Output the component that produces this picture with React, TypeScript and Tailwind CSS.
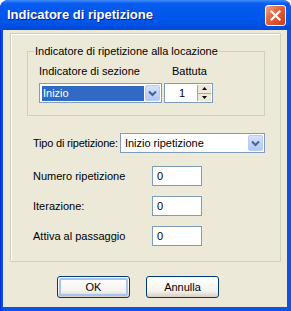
import type { ReactNode } from 'react';

// Windows XP style dialog: "Indicatore di ripetizione"

function Chevron() {
  return (
    <svg width="9" height="7" viewBox="0 0 9 7" aria-hidden="true">
      <path d="M1 1.5 L4.5 5 L8 1.5" fill="none" stroke="#4D6185" strokeWidth="2" />
    </svg>
  );
}

function DropButton() {
  return (
    <div className="flex w-[15px] h-full items-center justify-center rounded-[2px] border border-[#B8CCF4] bg-[linear-gradient(180deg,#D5E2FE_0%,#BFD1FA_60%,#B2C7F5_100%)]">
      <Chevron />
    </div>
  );
}

function TextBox({ value }: { value: string }) {
  return (
    <div className="flex h-[20px] w-[50px] items-center border border-[#7F9DB9] bg-white pl-[4px] text-[11px] leading-[13px] text-black">
      {value}
    </div>
  );
}

function Row({ label, children }: { label: string; children: ReactNode }) {
  return (
    <div className="flex items-center">
      <span className="w-[119px] shrink-0 whitespace-nowrap text-[11px] leading-[13px] text-black">{label}</span>
      {children}
    </div>
  );
}

function XpButton({ label, isDefault }: { label: string; isDefault?: boolean }) {
  return (
    <div className="flex h-[22px] w-[73px] items-center justify-center rounded-[3px] border border-[#003C74] bg-[linear-gradient(180deg,#FFFFFF_0%,#F4F3EE_70%,#D6D0C5_100%)] p-[1px]">
      <div
        className={
          isDefault
            ? 'flex h-full w-full items-center justify-center rounded-[2px] border-2 border-[#A7C3F0]'
            : 'flex h-full w-full items-center justify-center'
        }
      >
        <span className="text-[11px] leading-[13px] text-black">{label}</span>
      </div>
    </div>
  );
}

export default function App() {
  return (
    <div className="h-[311px] w-[291px] bg-white font-['Liberation_Sans',Arial,sans-serif]">
      <div className="flex h-full w-full flex-col overflow-hidden rounded-t-[8px] bg-[linear-gradient(90deg,#0019CF_0px,#0845DA_1px,#0B52E6_3px)]">
        {/* ── Title bar ─────────────────────────────────────────── */}
        <div className="flex h-[30px] flex-none items-center justify-between rounded-t-[8px] bg-[linear-gradient(180deg,#3D8BFA_0%,#0A5CF0_12%,#0058EE_40%,#0055E8_75%,#0048D8_100%)] pl-[7px] pr-[5px]">
          <span className="text-[13px] font-bold leading-[16px] text-white [text-shadow:1px_1px_0_#0A1E8C]">
            Indicatore di ripetizione
          </span>
          <div className="flex h-[21px] w-[21px] items-center justify-center rounded-[3px] border border-white bg-[linear-gradient(135deg,#F0A590_0%,#E3663F_40%,#CC3A12_100%)]">
            <svg width="11" height="11" viewBox="0 0 11 11" aria-hidden="true">
              <path d="M1.5 1.5 L9.5 9.5 M9.5 1.5 L1.5 9.5" stroke="white" strokeWidth="2.2" strokeLinecap="square" />
            </svg>
          </div>
        </div>

        {/* ── Body ──────────────────────────────────────────────── */}
        <div className="mb-[4px] ml-[3px] mr-[4px] flex flex-1 flex-col bg-[#ECE9D8]">
          <div className="ml-[7px] mt-[3px] flex h-[229px] w-[271px] flex-col border border-[#D0D0BF] shadow-[inset_1px_1px_0_#FFFFFF]">
            {/* inner group */}
            <div className="relative ml-[16px] mt-[17px] h-[65px] w-[238px] border border-[#D0D0BF] pl-[11px] pt-[13px]">
              <span className="absolute -top-[7px] left-[6px] bg-[#ECE9D8] px-[1px] text-[11px] leading-[13px] text-black">
                Indicatore di ripetizione alla locazione
              </span>
              <div className="flex text-[11px] leading-[13px] text-black">
                <span className="w-[133px]">Indicatore di sezione</span>
                <span>Battuta</span>
              </div>
              <div className="mt-[5px] flex gap-[2px]">
                <div className="flex h-[20px] w-[123px] items-center border border-[#7F9DB9] bg-white p-[1px]">
                  <div className="ml-[1px] mr-[1px] flex h-[15px] flex-1 items-center bg-[#316AC5] pl-[1px] text-[11px] leading-[13px] text-white">
                    Inizio
                  </div>
                  <DropButton />
                </div>
                <div className="flex h-[20px] w-[49px] items-center border border-[#7F9DB9] bg-white">
                  <span className="flex-1 pl-[14px] text-[11px] leading-[13px] text-black">1</span>
                  <div className="mr-[1px] flex h-[16px] w-[14px] flex-col border-l border-[#ACA899] bg-[#ECE9D8]">
                    <div className="flex flex-1 items-center justify-center border-b border-[#ACA899]">
                      <svg width="5" height="3" viewBox="0 0 5 3" aria-hidden="true">
                        <path d="M0 3 L2.5 0 L5 3 Z" fill="black" />
                      </svg>
                    </div>
                    <div className="flex flex-1 items-center justify-center">
                      <svg width="5" height="3" viewBox="0 0 5 3" aria-hidden="true">
                        <path d="M0 0 L2.5 3 L5 0 Z" fill="black" />
                      </svg>
                    </div>
                  </div>
                </div>
              </div>
            </div>

            {/* fields */}
            <div className="ml-[22px] mt-[17px] flex flex-col">
              <div className="flex w-[232px] items-center gap-[2px]">
                <span className="shrink-0 whitespace-nowrap text-[11px] leading-[13px] tracking-[-0.2px] text-black">Tipo di ripetizione:</span>
                <div className="flex h-[20px] flex-1 items-center border border-[#7F9DB9] bg-white p-[1px]">
                  <span className="flex-1 pl-[3px] text-[11px] leading-[13px] text-black">Inizio ripetizione</span>
                  <DropButton />
                </div>
              </div>
              <div className="mt-[13px] flex flex-col gap-[10px]">
                <Row label="Numero ripetizione">
                  <TextBox value="0" />
                </Row>
                <Row label="Iterazione:">
                  <TextBox value="0" />
                </Row>
                <Row label="Attiva al passaggio">
                  <TextBox value="0" />
                </Row>
              </div>
            </div>
          </div>

          {/* buttons */}
          <div className="ml-[54px] mt-[14px] flex gap-[16px]">
            <XpButton label="OK" isDefault />
            <XpButton label="Annulla" />
          </div>
        </div>
      </div>
    </div>
  );
}
